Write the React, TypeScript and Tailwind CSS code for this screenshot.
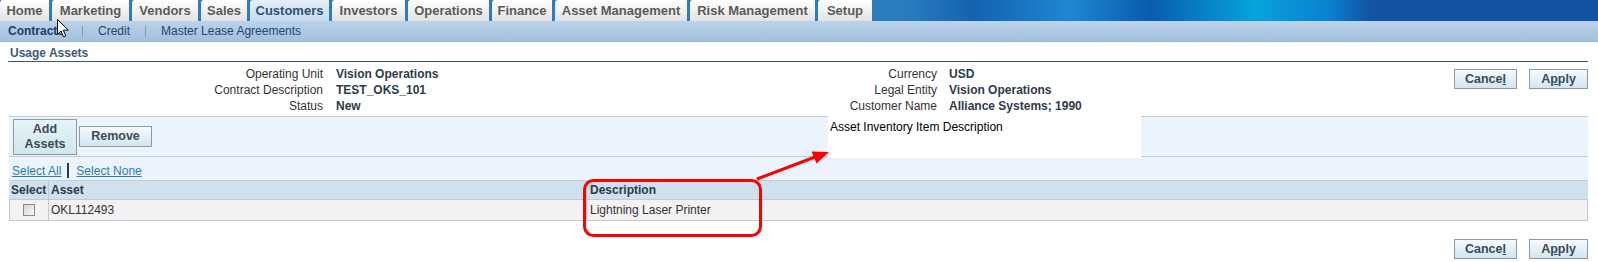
import React from "react";

const tabs: { label: string; w: string; active?: boolean }[] = [
  { label: "Home", w: "w-[49px]" },
  { label: "Marketing", w: "w-[77px]" },
  { label: "Vendors", w: "w-[66px]" },
  { label: "Sales", w: "w-[46px]" },
  { label: "Customers", w: "w-[79px]", active: true },
  { label: "Investors", w: "w-[73px]" },
  { label: "Operations", w: "w-[81px]" },
  { label: "Finance", w: "w-[60px]" },
  { label: "Asset Management", w: "w-[132px]" },
  { label: "Risk Management", w: "w-[125px]" },
  { label: "Setup", w: "w-[54px]" },
];

function Btn({ children, w }: { children: React.ReactNode; w: string }) {
  return (
    <div
      className={`${w} h-[20px] border border-[#8c99a6] bg-[linear-gradient(#f6fafd,#d2e5f0)] flex items-center justify-center text-[12.5px] font-bold text-[#3b4a5d] leading-none`}
    >
      {children}
    </div>
  );
}

function CancelApply() {
  return (
    <div className="flex gap-[12px]">
      <Btn w="w-[63px]">
        <span>
          Cance<span className="underline">l</span>
        </span>
      </Btn>
      <Btn w="w-[59px]">
        <span>
          A<span className="underline">p</span>ply
        </span>
      </Btn>
    </div>
  );
}

export default function App() {
  return (
    <div className="relative w-[1598px] h-[262px] overflow-hidden bg-white font-['Liberation_Sans',Arial,sans-serif] text-[12px] text-[#333]">
      {/* Tab row */}
      <div className="h-[21px] flex gap-[3px] bg-[linear-gradient(90deg,#2c7dbf_0px,#2c7dbf_900px,#1462b0_975px,#1d87d3_1070px,#0a5bb0_1150px,#06a3dd_1255px,#0a80cc_1330px,#1452a4_1370px,#1452a4_1598px)]">
        {tabs.map((t) => (
          <div
            key={t.label}
            className={`${t.w} h-full rounded-tl-[3px] flex items-center justify-center text-[13px] font-bold leading-none ${
              t.active
                ? "bg-[linear-gradient(#e4eef8,#c6daee)] text-[#2a4f7c]"
                : "bg-[linear-gradient(#ffffff,#e2e2e2)] text-[#5a5a5a]"
            }`}
          >
            {t.label}
          </div>
        ))}
      </div>

      {/* Sub tab bar */}
      <div className="h-[21px] flex items-center pl-[8px] bg-[linear-gradient(#bcd3e9,#a2c0de)] border-b border-[#98b5d3] text-[12px] text-[#24466f]">
        <span className="font-bold text-[#1d3e6a]">Contracts</span>
        <div className="ml-[18px] w-[1px] h-[11px] bg-[#7f9bbb]" />
        <span className="ml-[15px]">Credit</span>
        <div className="ml-[15px] w-[1px] h-[11px] bg-[#7f9bbb]" />
        <span className="ml-[15px]">Master Lease Agreements</span>
      </div>

      {/* Section header */}
      <div className="mx-[8px] mr-[10px] h-[20px] border-b border-[#3d5877] pl-[2px] pt-[3px] flex items-center">
        <span className="font-bold text-[#3b5a80] text-[12px] leading-none">Usage Assets</span>
      </div>

      {/* Info area */}
      <div className="flex items-start h-[54px]">
        <div className="ml-[9px] w-[591px] mt-[4px] grid grid-cols-[314px_auto] gap-x-[13px] leading-[16px]">
          <div className="text-right">Operating Unit</div>
          <div className="font-bold text-[#2d3a4b]">Vision Operations</div>
          <div className="text-right">Contract Description</div>
          <div className="font-bold text-[#2d3a4b]">TEST_OKS_101</div>
          <div className="text-right">Status</div>
          <div className="font-bold text-[#2d3a4b]">New</div>
        </div>
        <div className="mt-[4px] grid grid-cols-[337px_auto] gap-x-[12px] leading-[16px]">
          <div className="text-right">Currency</div>
          <div className="font-bold text-[#2d3a4b]">USD</div>
          <div className="text-right">Legal Entity</div>
          <div className="font-bold text-[#2d3a4b]">Vision Operations</div>
          <div className="text-right">Customer Name</div>
          <div className="font-bold text-[#2d3a4b]">Alliance Systems; 1990</div>
        </div>
        <div className="ml-auto mr-[10px] mt-[7px]">
          <CancelApply />
        </div>
      </div>

      {/* Toolbar + table */}
      <div className="ml-[9px] mr-[10px]">
        <div className="h-[40px] border-t border-[#c3cbd5] bg-[#ebf3fc] flex items-center pl-[4px] gap-[2px]">
          <div className="w-[64px] h-[36px] border border-[#8c99a6] bg-[linear-gradient(#e6f4f6,#cfe7ec)] flex flex-col items-center justify-center text-[12.5px] font-bold text-[#3b4a5d] leading-[15px]">
            <span>Add</span>
            <span>Assets</span>
          </div>
          <div className="w-[73px] h-[21px] border border-[#8c99a6] bg-[linear-gradient(#f6fafd,#d2e5f0)] flex items-center justify-center text-[12.5px] font-bold text-[#3b4a5d] leading-none">
            Remove
          </div>
        </div>
        <div className="h-[24px] border-t border-[#c3cbd5] bg-[#ebf3fc] flex items-center pl-[3px] pt-[4px]">
          <span className="text-[#2d7cb3] underline">Select All</span>
          <div className="ml-[6px] w-[2px] h-[15px] bg-[#223b5e]" />
          <span className="ml-[7px] text-[#2d7cb3] underline">Select None</span>
        </div>
        <div className="flex h-[19px] bg-[#cfe0ef] border-t border-[#c3cbd5] font-bold text-[#2d3a4b] leading-[18px]">
          <div className="w-[40px] pl-[2px] border-r border-[#b9c9d9]">Select</div>
          <div className="w-[537px] pl-[2px]">Asset</div>
          <div className="flex-1 pl-[3px] border-l border-[#b9c9d9]">Description</div>
        </div>
        <div className="flex h-[22px] bg-[#f2f2f4] border-t border-b border-l border-r border-[#c8c8c8] items-stretch">
          <div className="w-[39px] border-r border-[#c8c8c8] flex items-center justify-center">
            <div className="w-[12px] h-[12px] border border-[#8a8a8a] bg-[linear-gradient(135deg,#d6d6d6,#f8f8f8)]" />
          </div>
          <div className="w-[537px] pl-[2px] flex items-center">OKL112493</div>
          <div className="flex-1 pl-[3px] border-l border-[#c8c8c8] flex items-center">
            Lightning Laser Printer
          </div>
        </div>
        <div className="flex justify-end mt-[18px]">
          <CancelApply />
        </div>
      </div>

      {/* Tooltip box overlay */}
      <div className="absolute left-[828px] top-[116px] w-[313px] h-[42px] bg-white pl-[2px] pt-[3px] text-black leading-[16px] text-[12px]">
        Asset Inventory Item Description
      </div>

      {/* Red annotation */}
      <svg className="absolute left-0 top-0 pointer-events-none" width="1598" height="262">
        <rect x="584.5" y="180.5" width="176" height="55" rx="9" fill="none" stroke="#ff0000" strokeWidth="3" />
        <line x1="757" y1="179" x2="815" y2="157" stroke="#ff0000" strokeWidth="3" />
        <polygon points="829,152 816.5,163.5 811.5,151.5" fill="#ff0000" />
      </svg>

      {/* Mouse cursor */}
      <svg className="absolute left-[57px] top-[19px] pointer-events-none" width="13" height="19" viewBox="0 0 13 19">
        <path d="M0.5 0.5 L0.5 15.5 L4 12 L6.5 17.8 L8.8 16.8 L6.3 11.2 L11.3 11.2 Z" fill="#ffffff" stroke="#000000" strokeWidth="1" strokeLinejoin="round" />
      </svg>
    </div>
  );
}
